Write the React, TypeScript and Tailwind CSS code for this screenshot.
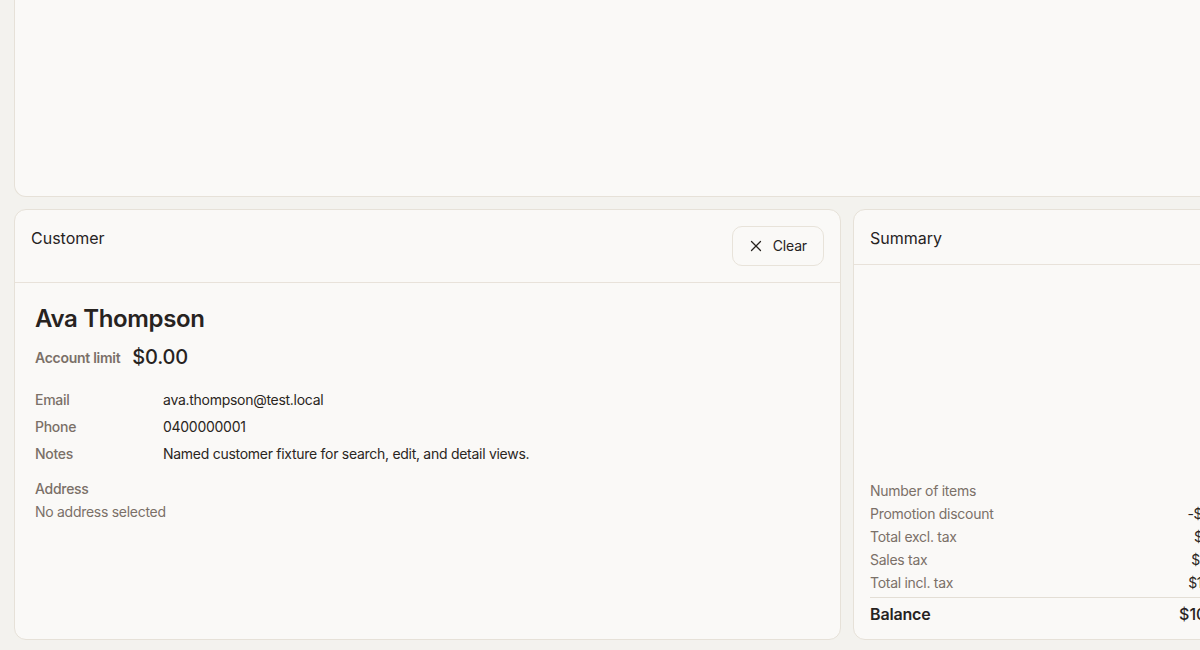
import React from "react";
import { X } from "lucide-react";

const details = [
  { label: "Email", value: "ava.thompson@test.local" },
  { label: "Phone", value: "0400000001" },
  { label: "Notes", value: "Named customer fixture for search, edit, and detail views." },
];

const summary = [
  { label: "Number of items", value: "1" },
  { label: "Promotion discount", value: "-$0.00" },
  { label: "Total excl. tax", value: "$9.09" },
  { label: "Sales tax", value: "$10.91" },
  { label: "Total incl. tax", value: "$10.00" },
];

export default function App() {
  return (
    <div
      className="w-[1200px] h-[650px] overflow-hidden bg-[#f3f2ee] text-[#27231f]"
      style={{ fontFamily: "Inter, 'Noto Sans', sans-serif" }}
    >
      <div className="flex flex-col gap-3 pl-[14px] w-[1260px]">
        <div className="h-[197px] w-[1234px] rounded-b-xl border border-t-0 border-[#e6e1d8] bg-[#faf9f7]" />
        <div className="flex gap-3">
          <section className="w-[827px] h-[431px] shrink-0 rounded-xl border border-[#e6e1d8] bg-[#faf9f7] flex flex-col">
            <header className="flex items-start justify-between p-4 border-b border-[#e8e2da]">
              <h2 className="text-base leading-6 font-normal">Customer</h2>
              <button className="h-10 flex items-center gap-2 pl-[14px] pr-4 rounded-[10px] border border-[#e8e3da] bg-[#faf9f7] text-sm tracking-[-0.01em] text-[#27231f]">
                <X size={18} strokeWidth={1.75} />
                <span>Clear</span>
              </button>
            </header>
            <div className="px-5 pt-5">
              <div className="text-2xl leading-8 font-semibold tracking-[-0.35px]">Ava Thompson</div>
              <div className="mt-2 flex items-center gap-3 h-7">
                <span className="text-sm font-semibold tracking-[-0.02em] text-[#7a7068] translate-y-[1px]">Account limit</span>
                <span className="text-xl font-medium tracking-[-0.01em]">$0.00</span>
              </div>
              <div className="mt-[19px] grid grid-cols-[128px_1fr] gap-y-[7px] text-sm leading-5 tracking-[-0.02em]">
                {details.map((d) => (
                  <React.Fragment key={d.label}>
                    <span className="font-medium text-[#7a7068]">{d.label}</span>
                    <span className="text-[#2a2622]">{d.value}</span>
                  </React.Fragment>
                ))}
              </div>
              <div className="mt-[15px] text-sm leading-5 font-medium tracking-[-0.02em] text-[#7a7068]">Address</div>
              <div className="mt-[3px] text-sm leading-5 tracking-[-0.02em] text-[#7a7068]">No address selected</div>
            </div>
          </section>
          <section className="w-[395px] h-[431px] shrink-0 rounded-xl border border-[#e6e1d8] bg-[#faf9f7] flex flex-col">
            <header className="px-4 pt-4 pb-[14px] border-b border-[#e8e2da]">
              <h2 className="text-base leading-6 font-normal">Summary</h2>
            </header>
            <div className="flex-1" />
            <div className="px-4 pb-[13px]">
              <div className="flex flex-col gap-[3px] text-sm leading-5 tracking-[-0.02em] text-[#7a7068]">
                {summary.map((s) => (
                  <div key={s.label} className="flex justify-between">
                    <span>{s.label}</span>
                    <span className="text-[#2a2622]">{s.value}</span>
                  </div>
                ))}
              </div>
              <div className="mt-[4px] pt-1 border-t border-[#e3ded5] flex justify-between text-base leading-6">
                <span className="font-semibold tracking-[-0.01em]">Balance</span>
                <span className="font-medium">$10.00</span>
              </div>
            </div>
          </section>
        </div>
      </div>
    </div>
  );
}
